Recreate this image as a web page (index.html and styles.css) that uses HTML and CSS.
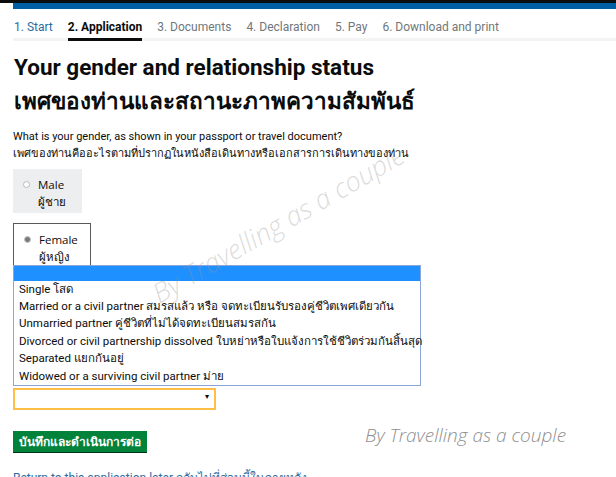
FILE: index.html
```html
<!DOCTYPE html>
<html>
  <head>
    <title>Your gender and relationship status</title>
    <meta charset="UTF-8" />
    <link rel="stylesheet" href="styles.css">
  </head>
  <body>
    <div class="topbar"><div class="blue"></div></div>
    <div class="container">
      <ul class="steps">
        <li class="done">1. Start</li>
        <li class="current">2. Application</li>
        <li>3. Documents</li>
        <li>4. Declaration</li>
        <li>5. Pay</li>
        <li>6. Download and print</li>
      </ul>

      <h1>Your gender and relationship status<br />เพศของท่านและสถานะภาพความสัมพันธ์</h1>

      <div class="question">
        What is your gender, as shown in your passport or travel document?<br />
        เพศของท่านคืออะไรตามที่ปรากฏในหนังสือเดินทางหรือเอกสารการเดินทางของท่าน
      </div>

      <label class="choice male">
        <span class="radio"></span>
        <span>Male<br />ผู้ชาย</span>
      </label>
      <label class="choice female">
        <span class="radio checked"></span>
        <span>Female<br />ผู้หญิง</span>
      </label>

      <div class="select-wrap">
        <ul class="options">
          <li class="selected">&nbsp;</li>
          <li>Single โสด</li>
          <li>Married or a civil partner สมรสแล้ว หรือ จดทะเบียนรับรองคู่ชีวิตเพศเดียวกัน</li>
          <li>Unmarried partner คู่ชีวิตที่ไม่ได้จดทะเบียนสมรสกัน</li>
          <li>Divorced or civil partnership dissolved ใบหย่าหรือใบแจ้งการใช้ชีวิตร่วมกันสิ้นสุด</li>
          <li>Separated แยกกันอยู่</li>
          <li>Widowed or a surviving civil partner ม่าย</li>
        </ul>
        <div class="select"><span class="arrow">&#9662;</span></div>
      </div>

      <div class="actions">
        <button class="button">บันทึกและดำเนินการต่อ</button>
        <span class="credit">By Travelling as a couple</span>
      </div>

      <a href="#" class="later">Return to this application later กลับไปที่ส่วนนี้ในภายหลัง</a>
    </div>

    <div class="watermark">By Travelling as a couple</div>
  </body>
</html>
```

FILE: styles.css
```css
body,
html {
  margin: 0;
  padding: 0;
  font-family: Roboto, "Liberation Sans", sans-serif;
  color: #0b0c0c;
  background: #ffffff;
  overflow: hidden;
}

.topbar {
  height: 6px;
  background: #ffffff;
  border-top: 3px solid #0b0c0c;
  padding-left: 13px;
}

.topbar .blue {
  height: 6px;
  background: #005ea5;
}

.container {
  padding: 0 0 0 13px;
}

.steps {
  list-style: none;
  margin: 11px 0 0 0;
  padding: 0 0 0 1px;
  display: flex;
  gap: 15px;
  font-size: 12px;
  color: #6f777b;
  border-bottom: 3px solid #f3f3f3;
}

.steps li {
  padding: 0 0 4px 0;
  border-bottom: 3px solid transparent;
  margin-bottom: -3px;
}

.steps .done {
  color: #2b6ca3;
}

.steps .current {
  color: #0b0c0c;
  font-weight: bold;
  border-bottom-color: #0b0c0c;
}

h1 {
  margin: 9px 0 0 1px;
  font-size: 22.5px;
  line-height: 34px;
  font-weight: bold;
}

.question {
  margin: 10px 0 0 0;
  font-size: 11px;
  line-height: 17px;
}

.choice {
  display: flex;
  gap: 8px;
  font-family: "Open Sans", sans-serif;
  font-size: 11.5px;
  line-height: 17px;
  padding: 7px 10px 9px 10px;
  box-sizing: border-box;
}

.male {
  margin-top: 7px;
  width: 69px;
  height: 44px;
  background: #eceeef;
}

.female {
  margin-top: 10px;
  width: 78px;
  height: 48px;
  border: 1px solid #595959;
}

.radio {
  width: 5px;
  height: 5px;
  margin: 5px 0 0 0;
  border: 1px solid #b8b8b8;
  border-radius: 50%;
  background: #ffffff;
}

.radio.checked {
  background: #7a7a7a;
  border-color: #c4c4c4;
}

.select-wrap {
  position: relative;
  margin-top: 117px;
  width: 203px;
}

.options {
  position: absolute;
  left: 0;
  bottom: 100%;
  margin: 0 0 2px 0;
  padding: 0;
  list-style: none;
  width: 406px;
  background: #ffffff;
  border: 1px solid #8aa6d6;
  font-size: 11.5px;
  line-height: 17.4px;
  white-space: nowrap;
}

.options li {
  padding-left: 5px;
}

.options .selected {
  background: #1e90ff;
  height: 15px;
}

.select {
  height: 18px;
  border: 2px solid #ffbf47;
  position: relative;
}

.arrow {
  position: absolute;
  right: 5px;
  top: 2px;
  font-size: 8px;
  color: #0b0c0c;
}

.actions {
  display: flex;
  align-items: flex-start;
  margin-top: 21px;
}

.button {
  background: #00823b;
  color: #ffffff;
  border: none;
  border-bottom: 1px solid #003618;
  font-family: Roboto, sans-serif;
  font-weight: bold;
  font-size: 12px;
  height: 22px;
  padding: 0 6px;
  margin: 0;
}

.credit {
  margin: -9px 0 0 218px;
  font-family: "Open Sans", sans-serif;
  font-style: italic;
  font-weight: 300;
  font-size: 19px;
  color: #8f8f8f;
  white-space: nowrap;
}

.later {
  display: block;
  margin-top: 15px;
  font-size: 12px;
  color: #2b6ca3;
  text-decoration: none;
  white-space: nowrap;
}

.watermark {
  position: absolute;
  left: 135px;
  top: 205px;
  transform: rotate(-30deg);
  font-family: "Open Sans", sans-serif;
  font-style: italic;
  font-weight: 300;
  font-size: 27px;
  color: rgba(150, 150, 150, 0.35);
  white-space: nowrap;
  pointer-events: none;
}
```
